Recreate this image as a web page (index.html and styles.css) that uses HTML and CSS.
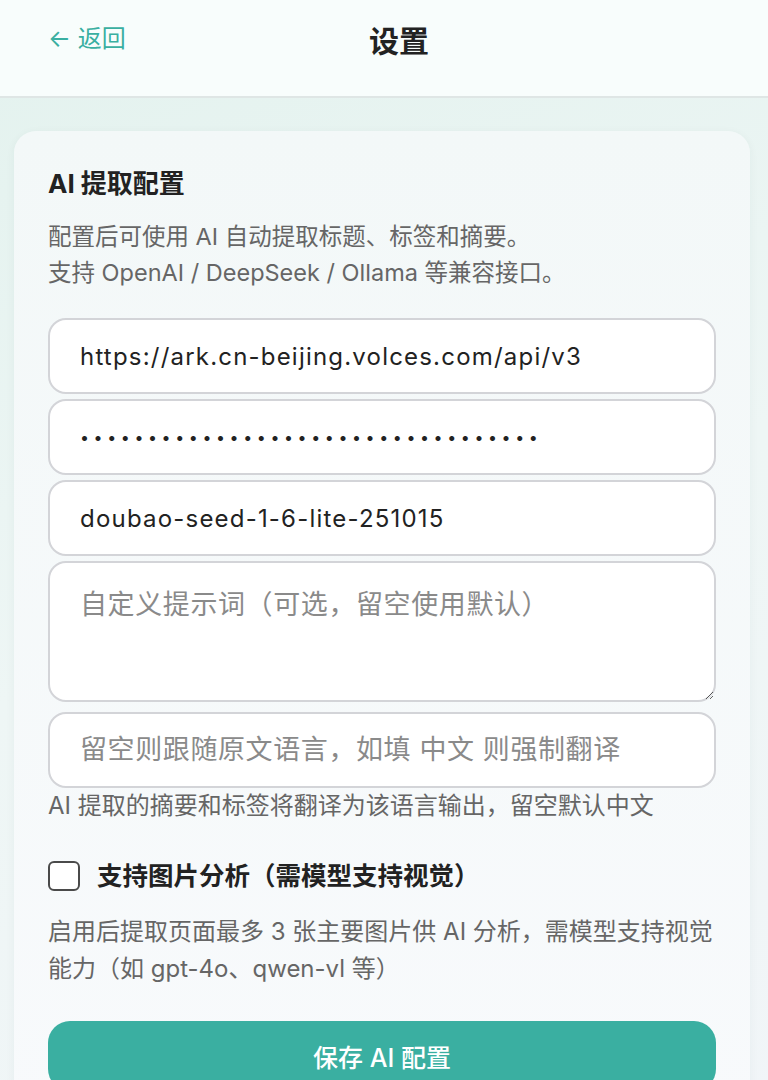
FILE: index.html
```html
<!DOCTYPE html>
<html lang="zh-CN">
<head>
    <meta charset="UTF-8">
    <meta name="viewport" content="width=device-width, initial-scale=1.0">
    <title>设置</title>
    <link rel="stylesheet" href="styles.css">
</head>
<body>
    <header class="topbar">
        <a class="back-link" href="#">&larr; 返回</a>
        <h1 class="page-title">设置</h1>
        <span class="topbar-spacer"></span>
    </header>
    <main class="page">
        <section class="card">
            <h2 class="card-title">AI 提取配置</h2>
            <p class="card-desc">配置后可使用 AI 自动提取标题、标签和摘要。<br>支持 OpenAI / DeepSeek / Ollama 等兼容接口。</p>
            <form class="ai-form">
                <input class="field" type="text" value="https://ark.cn-beijing.volces.com/api/v3">
                <input class="field field-secret" type="password" value="sk-0123456789abcdef0123456789abcde">
                <input class="field" type="text" value="doubao-seed-1-6-lite-251015">
                <textarea class="field field-area" placeholder="自定义提示词（可选，留空使用默认）"></textarea>
                <input class="field" type="text" placeholder="留空则跟随原文语言，如填 中文 则强制翻译">
                <p class="hint">AI 提取的摘要和标签将翻译为该语言输出，留空默认中文</p>
                <label class="check-row">
                    <input class="check" type="checkbox">
                    <span>支持图片分析（需模型支持视觉）</span>
                </label>
                <p class="check-desc">启用后提取页面最多 3 张主要图片供 AI 分析，需模型支持视觉能力（如 gpt-4o、qwen-vl 等）</p>
                <button class="save-btn" type="button">保存 AI 配置</button>
            </form>
        </section>
    </main>
</body>
</html>
```

FILE: styles.css
```css
* {
    box-sizing: border-box;
}
body {
    margin: 0;
    font-family: Inter, "Noto Sans CJK SC", sans-serif;
    background: linear-gradient(160deg, #e3f2ee 0%, #eef6f5 50%, #f1f5f8 100%);
    color: #222;
    min-height: 1080px;
}
.topbar {
    height: 98px;
    display: flex;
    align-items: center;
    justify-content: space-between;
    padding: 0 48px;
    background-color: #f8fdfc;
    border-bottom: 2px solid #dfe6e5;
}
.back-link {
    width: 135px;
    color: #3aafa1;
    text-decoration: none;
    font-size: 24px;
    line-height: 32px;
    margin-top: -18px;
}
.page-title {
    margin: -18px 0 0;
    font-size: 30px;
    font-weight: 700;
    color: #222;
}
.topbar-spacer {
    width: 105px;
}
.page {
    padding: 33px 18px 0 14px;
}
.card {
    background: linear-gradient(180deg, #f3f8f8 0%, #f8fafc 100%);
    border-radius: 22px;
    padding: 37px 34px 40px;
    box-shadow: 0 2px 10px rgba(0, 60, 50, 0.05);
}
.card-title {
    margin: 0;
    font-size: 26px;
    line-height: 32px;
    font-weight: 700;
    color: #222;
}
.card-desc {
    margin: 19px 0 27px;
    font-size: 23.5px;
    line-height: 36px;
    color: #666;
}
.ai-form {
    display: flex;
    flex-direction: column;
}
.field {
    width: 100%;
    height: 76px;
    margin: 0 0 5px;
    padding: 0 30px;
    border: 2px solid #d3d4d8;
    border-radius: 18px;
    background-color: #fff;
    font-family: Inter, "Noto Sans CJK SC", sans-serif;
    font-size: 24px;
    letter-spacing: 1.2px;
    color: #222;
    outline: none;
}
.field::placeholder {
    color: #8a8a8a;
    font-size: 27px;
    letter-spacing: 0.6px;
}
.field-secret {
    font-size: 16px;
    letter-spacing: 4.6px;
}
.field-area {
    height: 141px;
    margin-bottom: 10px;
    padding: 23px 30px;
    resize: vertical;
    line-height: 38px;
}
.hint {
    margin: -2px 0 0;
    font-size: 24px;
    line-height: 30px;
    color: #666;
}
.check-row {
    display: flex;
    align-items: center;
    gap: 17px;
    margin-top: 38px;
    font-size: 25.5px;
    line-height: 34px;
    font-weight: 700;
    color: #222;
}
.check {
    appearance: none;
    width: 32px;
    height: 30px;
    margin: 0;
    border: 2px solid #4a4a4a;
    border-radius: 6px;
    background-color: #fff;
}
.check-desc {
    margin: 20px 0 0;
    font-size: 24px;
    line-height: 37px;
    color: #666;
}
.save-btn {
    margin-top: 34px;
    height: 70px;
    border: none;
    border-radius: 22px;
    background-color: #3aafa1;
    color: #fff;
    font-family: Inter, "Noto Sans CJK SC", sans-serif;
    font-size: 25px;
    font-weight: 500;
    cursor: pointer;
}
.save-btn:hover {
    background-color: #339c90;
}
```
